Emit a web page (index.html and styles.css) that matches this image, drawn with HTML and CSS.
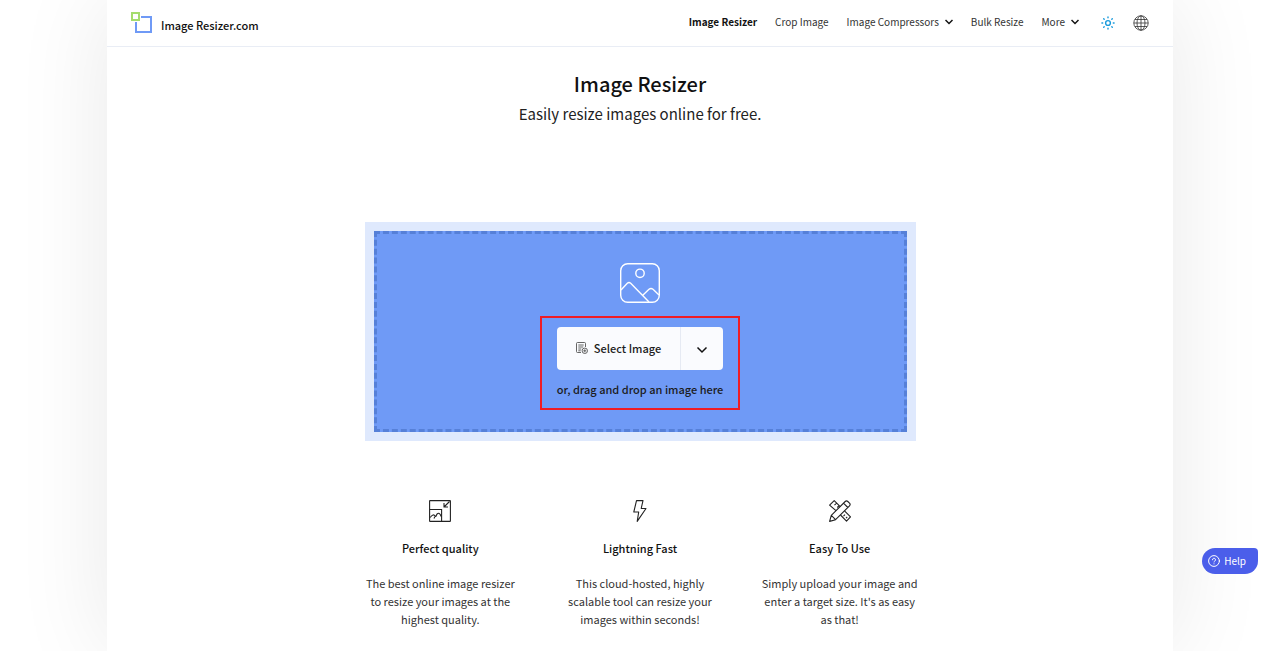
FILE: index.html
```html
<!DOCTYPE html>
<html lang="en">
<head>
  <meta charset="UTF-8">
  <meta name="viewport" content="width=device-width, initial-scale=1">
  <title>Image Resizer</title>
  <link rel="stylesheet" href="styles.css">
</head>
<body>

  <div class="page">
    <header class="header">
      <a class="logo" href="#">
        <svg width="22" height="22" viewBox="0 0 22 22" fill="none">
          <path d="M10 5h10v15H5V10" stroke="#6f9af6" stroke-width="2"/>
          <rect x="1" y="1" width="7" height="7" stroke="#a5dc6e" stroke-width="2"/>
        </svg>
        <span>Image Resizer.com</span>
      </a>

      <nav class="nav">
        <a class="active" href="#">Image Resizer</a>
        <a href="#">Crop Image</a>
        <button type="button">Image Compressors
          <svg class="chevron" width="8" height="6" viewBox="0 0 8 6"><path d="M.5 1L4 4.500 7.500 1"/></svg>
        </button>
        <a href="#">Bulk Resize</a>
        <button type="button">More
          <svg class="chevron" width="8" height="6" viewBox="0 0 8 6"><path d="M.5 1L4 4.500 7.500 1"/></svg>
        </button>
      </nav>

      <div class="tools">
        <button type="button" aria-label="Toggle theme">
          <svg width="14" height="14" viewBox="0 0 14 14" fill="none" stroke="#1a9bdc" stroke-width="1.4" stroke-linecap="round">
            <circle cx="7" cy="7" r="2.4"/>
            <path d="M7 .9v.8M7 12.3v.8M.9 7h.8M12.3 7h.8M2.7 2.7l.5.5M10.8 10.8l.5.5M2.7 11.3l.5-.5M10.8 3.2l.5-.5"/>
          </svg>
        </button>
        <button type="button" aria-label="Language">
          <svg width="16" height="16" viewBox="0 0 16 16" fill="none" stroke="#333" stroke-width=".8">
            <circle cx="8" cy="8" r="7.2"/>
            <ellipse cx="8" cy="8" rx="4" ry="7.2"/>
            <path d="M8 .8v14.4M.8 8h14.4M2 4.5h12M2 11.5h12"/>
          </svg>
        </button>
      </div>
    </header>

    <main class="main">
      <h1>Image Resizer</h1>
      <p class="subtitle">Easily resize images online for free.</p>

      <section class="dropzone">
        <div class="dropzone-inner">
          <svg width="40" height="40" viewBox="0 0 40 40" fill="none" stroke="#fff" stroke-width="1.4">
            <rect x=".7" y=".7" width="38.6" height="38.6" rx="7"/>
            <circle cx="20" cy="10.3" r="4.2"/>
            <path d="M1 27l6.300-6.700q1.700-1.500 3.400 0L29 39M22.500 32.500l6.500-6.200q2-1.600 4 0l6 5.700"/>
          </svg>
          <div class="picker">
            <div class="picker-buttons">
              <button class="select-btn" type="button">
                <svg width="12" height="12" viewBox="0 0 12 12" fill="none" stroke="#555" stroke-width=".9">
                  <path d="M9.500 5V1.500a1 1 0 0 0-1-1h-7a1 1 0 0 0-1 1v8a1 1 0 0 0 1 1H5M2.300 3h5.400M2.300 5h5M2.300 7h3M2.300 8.800h2.400"/>
                  <circle cx="8.800" cy="8.800" r="2.700"/>
                  <path d="M8.800 7.300v3M7.300 8.800h3"/>
                </svg>
                Select Image
              </button>
              <button class="more-btn" type="button" aria-label="More sources">
                <svg class="chevron" width="12" height="8" viewBox="0 0 12 8"><path d="M1.500 1.500L6 6l4.500-4.500"/></svg>
              </button>
            </div>
            <p>or, drag and drop an image here</p>
          </div>
        </div>
      </section>

      <section class="features">
        <article>
          <svg width="22" height="22" viewBox="0 0 22 22" fill="none" stroke="#222" stroke-width="1.100">
            <rect x=".6" y=".6" width="20.800" height="20.800" rx=".5"/>
            <path d="M.6 9.500h12v12M15 3v4h4M15 7l5.500-5.500"/>
            <path d="M1.200 17.500q2.800-4.500 5.300-1.200M5 18.500q.5-2 2-2.200.8-3 2.600-3 1.400 0 2.600 3.200" stroke-linejoin="round"/>
          </svg>
          <h2>Perfect quality</h2>
          <p>The best online image resizer to resize your images at the highest quality.</p>
        </article>
        <article>
          <svg width="22" height="22" viewBox="0 0 22 22" fill="none" stroke="#222" stroke-width="1.100" stroke-linejoin="round">
            <path d="M7.500.6H14L12.200 8.500H17L8.200 21.400l1.500-9.400H4.800z"/>
          </svg>
          <h2>Lightning Fast</h2>
          <p>This cloud-hosted, highly scalable tool can resize your images within seconds!</p>
        </article>
        <article>
          <svg width="22" height="22" viewBox="0 0 22 22" fill="none" stroke="#222" stroke-width="1.100" stroke-linejoin="round">
            <path d="M.6 21.400l1.700-6L16.200 1.500q1.300-1.300 2.600 0l1.700 1.700q1.300 1.300 0 2.600L6.600 19.700zM2.300 15.400l4.300 4.300M14.500 3.200l4.300 4.300"/>
            <path d="M7 10.700L.6 5.200l4.600-4.600 6 6M5.500 5.200l2-2M8.300 7.500l1.500-1.500M11.500 15l6 6.200 4-4.300-6-6M14.500 16.200l1.500-1.500M17 18.200l1.200-1.200"/>
          </svg>
          <h2>Easy To Use</h2>
          <p>Simply upload your image and enter a target size. It's as easy as that!</p>
        </article>
      </section>
    </main>
  </div>

  <button class="help-btn" type="button">
    <svg width="12" height="12" viewBox="0 0 12 12" fill="none" stroke="#fff" stroke-linecap="round">
      <circle cx="6" cy="6" r="5.400"/>
      <path d="M4.500 4.800a1.500 1.500 0 1 1 2.300 1.200q-.8.500-.8 1M6 8.800v.1"/>
    </svg>
    Help
  </button>

</body>
</html>
```
FILE: styles.css
```css
* {
  box-sizing: border-box;
}

body {
  margin: 0;
  font-family: 'Noto Sans CJK SC', 'Open Sans', sans-serif;
  font-size: 11px;
  line-height: 18px;
  color: #333;
  background: white;
  overflow-x: hidden;
}

h1, h2, p {
  margin: 0;
}

a {
  color: inherit;
  text-decoration: none;
}

button {
  font: inherit;
  color: inherit;
  background: none;
  border: none;
  padding: 0;
  cursor: pointer;
}

svg {
  flex-shrink: 0;
}

.chevron {
  fill: none;
  stroke: #111;
  stroke-width: 1.5;
}

.page {
  max-width: 1066px;
  min-height: 100vh;
  margin: 0 auto;
  background: white;
  box-shadow: 0 0 90px rgba(0, 0, 0, 0.09);
}

/* Header */
.header {
  display: flex;
  align-items: center;
  height: 47px;
  padding: 0 24px;
  border-bottom: 1px solid #e9edf5;
}

.logo {
  display: flex;
  align-items: center;
  gap: 8px;
  margin-right: auto;
  font-size: 11px;
  font-weight: 500;
  color: #111;
}

.logo span {
  padding-top: 4px;
}

.nav {
  display: flex;
  gap: 18px;
  padding-bottom: 2px;
  font-size: 10px;
}

.nav button {
  display: flex;
  align-items: center;
  gap: 6px;
}

.nav .active {
  font-weight: 700;
  color: #111;
}

.tools {
  display: flex;
  align-items: center;
  gap: 18px;
  margin-left: 22px;
}

.tools button {
  display: flex;
}

/* Main */
.main {
  display: flex;
  flex-direction: column;
  align-items: center;
  padding: 20px 24px;
  text-align: center;
}

h1 {
  font-size: 20px;
  line-height: 34px;
  font-weight: 500;
  color: #111;
}

.subtitle {
  font-size: 15px;
  line-height: 26px;
  color: #222;
}

.dropzone {
  width: 100%;
  max-width: 551px;
  margin-top: 95px;
  padding: 9px;
  background: #dfe9fd;
}

.dropzone-inner {
  display: flex;
  flex-direction: column;
  align-items: center;
  gap: 13px;
  padding: 29px 20px 19px;
  background: #6f9af6;
  border: 3px dashed #5680d8;
}

.picker {
  padding: 9px 15px 10px;
  border: 2px solid #ef1c24;
}

.picker-buttons {
  display: flex;
  height: 43px;
  margin-bottom: 10px;
  background: #fafbfe;
  border-radius: 4px;
}

.picker p,
.select-btn {
  font-weight: 500;
  color: #1c1c1c;
}

.select-btn {
  display: flex;
  flex: 1;
  align-items: center;
  justify-content: center;
  gap: 6px;
  padding-bottom: 2px;
  border-right: 1px solid #e6eaf3;
}

.more-btn {
  width: 42px;
}

.features {
  display: grid;
  grid-template-columns: repeat(3, 1fr);
  gap: 42px;
  width: 100%;
  max-width: 557px;
  margin-top: 59px;
}

.features svg {
  display: block;
  margin: 0 auto;
}

.features h2 {
  margin: 17px 0;
  font-size: 11px;
  font-weight: 500;
  color: #111;
}

/* Help widget */
.help-btn {
  position: fixed;
  right: 22px;
  bottom: 77px;
  display: flex;
  align-items: center;
  gap: 4px;
  height: 26px;
  padding: 0 12px 1px 6px;
  font-size: 10px;
  color: white;
  background: #4b5eea;
  border-radius: 13px 4px 13px 13px;
}
```
